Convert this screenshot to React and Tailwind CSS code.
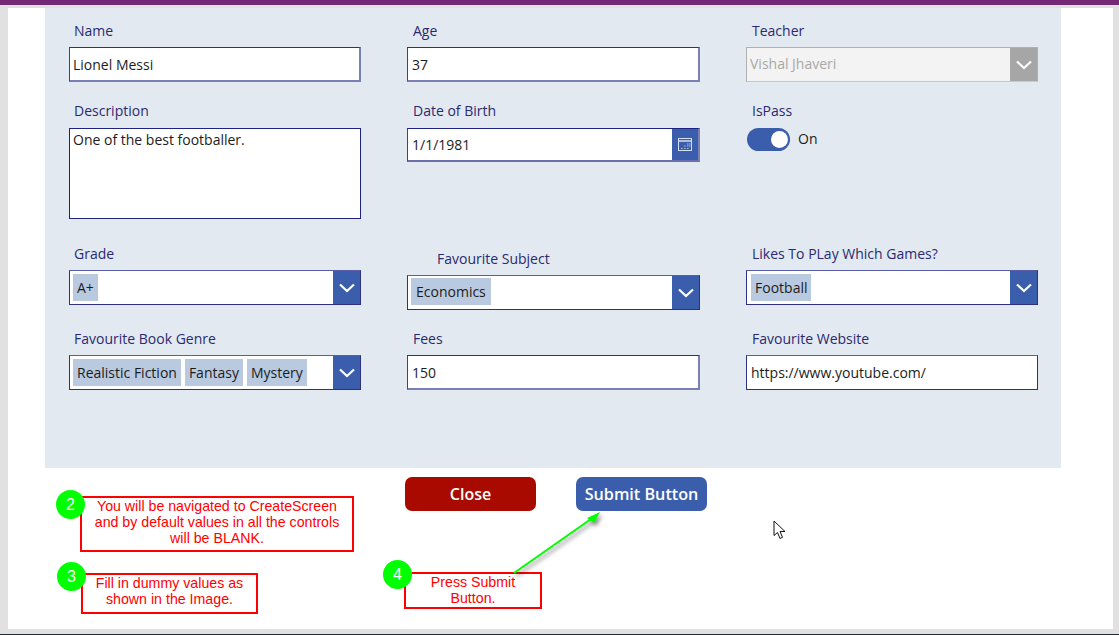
import React from 'react'

const sans = "font-['Open_Sans',sans-serif]"

function Chevron({ className }) {
  return (
    <svg viewBox="0 0 18 12" className={className} fill="none" stroke="currentColor" strokeWidth="2.2">
      <path d="M2 2.5 L9 9 L16 2.5" />
    </svg>
  )
}

function CalendarIcon() {
  return (
    <svg viewBox="0 0 14 13" className="w-[14px] h-[13px] text-[#d5deef]" fill="none" stroke="currentColor">
      <rect x="0.5" y="0.5" width="13" height="12" />
      <path d="M1 3 H13" strokeWidth="1.5" />
      <path d="M3 10.5 H4.5 M6 10.5 H7.5 M6 8 H7.5 M9 6 H10.5 M9 8 H10.5 M9 10.5 H10.5 M11 6 H12.5 M11 8 H12.5" strokeOpacity="0.75" />
    </svg>
  )
}

function Label({ children, className = '' }) {
  return <div className={`text-[14px] leading-[20px] h-[20px] text-[#2a2a70] ${className}`}>{children}</div>
}

function TextBox({ value, className = '' }) {
  return (
    <div className={`mt-[6px] h-[35px] border border-r-2 border-b-2 border-t-[#2e3180] border-l-[#3c3f8c] border-r-[#7b80b4] border-b-[#7b80b4] bg-white flex items-center text-[14px] text-[#1c1c1c] ${className}`}>
      {value}
    </div>
  )
}

function Chip({ children, className }) {
  return <span className={`h-[27px] flex items-center bg-[#b9cae0] text-[14px] text-[#1c1c1c] ${className}`}>{children}</span>
}

function ComboBox({ items, chipClass = 'px-[4px]', listClass = 'pl-[3px]', className = '' }) {
  return (
    <div className={`mt-[6px] h-[35px] border border-[#2e3180] border-t-[#5a5ea4] bg-white flex items-stretch ${className}`}>
      <div className={`flex-1 flex items-center gap-[4px] ${listClass}`}>
        {items.map(i => <Chip key={i} className={chipClass}>{i}</Chip>)}
      </div>
      <div className="w-[27px] bg-[#3a5eab] flex items-center justify-center">
        <Chevron className="w-[18px] h-[12px] text-white" />
      </div>
    </div>
  )
}

function Callout({ n, className, circle, children }) {
  return (
    <div className={`absolute border-2 border-[#ff0000] bg-white font-['Liberation_Sans',sans-serif] text-[14.2px] leading-[16px] text-[#ff0000] text-center ${className}`}>
      {children}
      <span className={`absolute w-[29px] h-[29px] rounded-full bg-[#00ff00] text-white text-[16px] flex items-center justify-center ${circle}`}>{n}</span>
    </div>
  )
}

export default function App() {
  return (
    <div className={`relative w-[1119px] h-[635px] overflow-hidden bg-[#e1e1e1] ${sans}`}>
      <div className="h-[5px] bg-[#742774]" />
      <div className="mt-[3px] mx-[8px] w-[1105px] h-[621px] bg-white">
        <div className="ml-[37px] w-[1016px] h-[460px] bg-[#e3e9f1] pl-[24px] pt-[13px] flex gap-[46px]">
          <div className="w-[292px]">
            <Label className="pl-[5px]">Name</Label>
            <TextBox value="Lionel Messi" className="pl-[3px]" />
            <Label className="pl-[5px] mt-[19px]">Description</Label>
            <div className="mt-[7px] h-[91px] border border-[#1f2380] bg-white pl-[3px] pt-[1px] text-[14px] leading-[20px] text-[#1c1c1c]">One of the best footballer.</div>
            <Label className="pl-[5px] mt-[25px]">Grade</Label>
            <ComboBox items={['A+']} />
            <Label className="pl-[5px] mt-[24px]">Favourite Book Genre</Label>
            <ComboBox items={['Realistic Fiction', 'Fantasy', 'Mystery']} />
          </div>
          <div className="w-[293px]">
            <Label className="pl-[6px]">Age</Label>
            <TextBox value="37" className="pl-[4px]" />
            <Label className="pl-[6px] mt-[19px]">Date of Birth</Label>
            <div className="mt-[7px] h-[34px] border border-r-2 border-b-2 border-t-[#1f2380] border-l-[#3c3f8c] border-r-[#7b80b4] border-b-[#6a6fac] bg-white flex items-stretch">
              <div className="flex-1 pl-[4px] flex items-center text-[14px] text-[#1c1c1c]">1/1/1981</div>
              <div className="w-[26px] bg-[#3a5eab] flex items-center justify-center"><CalendarIcon /></div>
            </div>
            <Label className="pl-[30px] mt-[87px]">Favourite Subject</Label>
            <ComboBox items={['Economics']} chipClass="px-[5px]" listClass="pl-[3px] pb-[2px]" />
            <Label className="pl-[6px] mt-[19px]">Fees</Label>
            <TextBox value="150" className="pl-[4px]" />
          </div>
          <div className="w-[292px]">
            <Label className="pl-[6px]">Teacher</Label>
            <div className="mt-[6px] h-[35px] border border-[#b0b0b0] border-b-[#c8c8c8] bg-[#f3f3f3] flex items-stretch">
              <div className="flex-1 pl-[3px] pb-[2px] flex items-center text-[14px] text-[#a8a8a8]">Vishal Jhaveri</div>
              <div className="w-[27px] bg-[#a6a6a6] flex items-center justify-center"><Chevron className="w-[18px] h-[12px] text-white" /></div>
            </div>
            <Label className="pl-[6px] mt-[19px]">IsPass</Label>
            <div className="mt-[7px] ml-[1px] flex items-center gap-[8px]">
              <div className="w-[43px] h-[23px] rounded-full bg-[#3a5eab] flex items-center justify-end pr-[2px]">
                <div className="w-[17px] h-[17px] rounded-full bg-white" />
              </div>
              <span className="text-[14px] text-[#1c1c1c] -mt-[2px]">On</span>
            </div>
            <Label className="pl-[6px] mt-[93px]">Likes To PLay Which Games?</Label>
            <ComboBox items={['Football']} listClass="pl-[4px]" />
            <Label className="pl-[6px] mt-[24px]">Favourite Website</Label>
            <TextBox value="https://www.youtube.com/" className="pl-[4px] !border !border-[#2e3180] !border-t-[#5a5ea4]" />
          </div>
        </div>
        <div className="flex gap-[40px] ml-[397px] mt-[9px]">
          <button className="w-[131px] h-[34px] rounded-[7px] bg-[#a80a00] text-white text-[16px] font-semibold">Close</button>
          <button className="w-[131px] h-[34px] rounded-[7px] bg-[#3a5eab] text-white text-[16.2px] font-semibold">Submit Button</button>
        </div>
      </div>
      <div className="absolute left-0 right-0 bottom-0 h-[1px] bg-[#1f2a38]" />

      <Callout n="2" className="left-[80px] top-[496px] w-[274px] h-[56px]" circle="-left-[26px] -top-[8px]">
        You will be navigated to CreateScreen<br />and by default values in all the controls<br />will be BLANK.
      </Callout>
      <Callout n="3" className="left-[81px] top-[573px] w-[177px] h-[41px]" circle="-left-[26px] -top-[13px]">
        Fill in dummy values as<br />shown in the Image.
      </Callout>
      <Callout n="4" className="left-[404px] top-[572px] w-[138px] h-[37px]" circle="-left-[23px] -top-[14px]">
        Press Submit<br />Button.
      </Callout>

      <svg className="absolute left-[505px] top-[505px] w-[110px] h-[80px] drop-shadow-[2px_3px_2px_rgba(0,0,0,0.5)]" viewBox="0 0 110 80" fill="none">
        <path d="M9 68 L86 14" stroke="#00ff00" strokeWidth="2" />
        <path d="M95 7 L82 13 L89 18 Z" fill="#00ff00" />
      </svg>

      <svg className="absolute left-[773px] top-[520px] w-[14px] h-[20px]" viewBox="0 0 14 20">
        <path d="M1 1 V15.5 L4.5 12.5 L7 18.5 L9.5 17.3 L7 11.5 H12 Z" fill="white" stroke="#111" strokeWidth="1" />
      </svg>
    </div>
  )
}
